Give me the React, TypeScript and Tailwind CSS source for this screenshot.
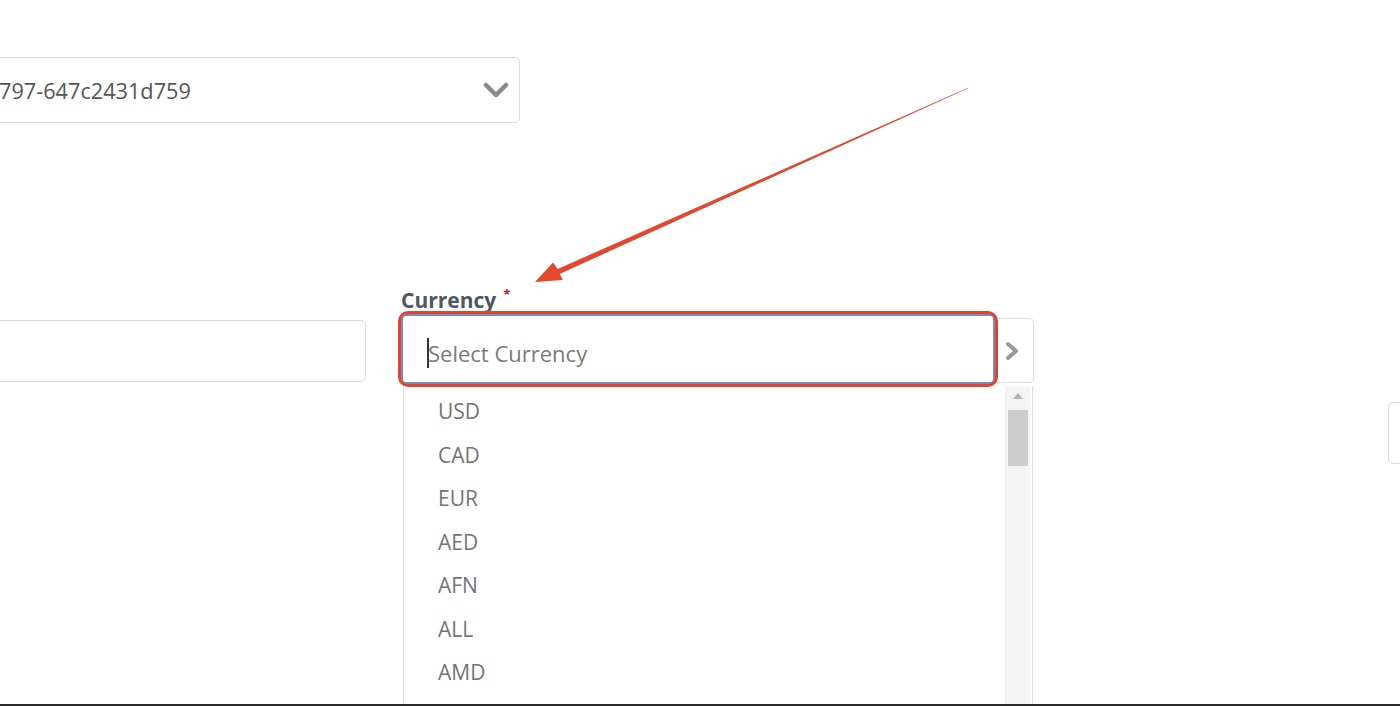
import React from "react";

const items = ["USD", "CAD", "EUR", "AED", "AFN", "ALL", "AMD", ""];

export default function App() {
  return (
    <div
      className="relative w-[1400px] h-[706px] overflow-hidden bg-white flex flex-col"
      style={{ fontFamily: '"Open Sans", "Noto Sans", sans-serif' }}
    >
      <div className="flex-1 overflow-hidden pt-[57px]">
        {/* top select */}
        <div className="ml-[-20px] w-[540px] h-[66px] border border-[#d9d9d9] rounded-[5px] flex items-center justify-between pr-[10px]">
          <span className="ml-[18px] text-[21.7px] text-[#555] mt-[2px]">797-647c2431d759</span>
          <svg width="26" height="16" viewBox="0 0 26 16">
            <polyline points="3,3 13,13 23,3" fill="none" stroke="#8a8a8a" strokeWidth="4.5" strokeLinecap="round" strokeLinejoin="round" />
          </svg>
        </div>

        {/* second row */}
        <div className="flex items-start mt-[166px]">
          <div className="ml-[-20px] w-[386px] h-[62px] mt-[31px] border border-[#d9d9d9] rounded-[5px] shrink-0" />

          <div className="ml-[35px] w-[633px] shrink-0 flex flex-col">
            <div className="h-[25px] flex items-start">
              <span className="text-[21px] font-bold text-[#4d5863] leading-[25px] mt-[-1px]">Currency</span>
              <span className="text-[13px] font-bold text-[#b0202a] ml-[7px] leading-none mt-[-1px]">*</span>
            </div>
            <div className="flex items-start h-[73px]">
              <div className="relative w-[594px] h-[70px] border-2 border-[#6f8fc4] rounded-[5px] flex items-center pl-[24px] shrink-0">
                <span className="w-[2px] h-[30px] bg-[#333] mt-[8px]" />
                <span className="text-[22px] text-[#7a7a7a] ml-[-1px] mt-[8px]">Select Currency</span>
                <div className="absolute inset-[-5px] border-[3px] border-[#e2432f] rounded-[10px] pointer-events-none" />
              </div>
              <div className="w-[39px] h-[65px] mt-[4px] border border-[#dcdcdc] border-l-0 rounded-r-[5px] flex items-center justify-center pr-[4px] shrink-0">
                <svg width="14" height="20" viewBox="0 0 14 20">
                  <polyline points="3,3 11,10 3,17" fill="none" stroke="#999" strokeWidth="4" strokeLinecap="round" strokeLinejoin="round" />
                </svg>
              </div>
            </div>
            <div className="ml-[2px] w-[630px] h-[330px] border-l border-r border-[#dedede] flex shadow-[2px_0_6px_rgba(0,0,0,0.04)]">
              <div className="flex-1 pt-[3px]">
                {items.map((c, i) => (
                  <div key={i} className="h-[43.5px] flex items-center pl-[34px] text-[21px] text-[#747474]">
                    {c}
                  </div>
                ))}
              </div>
              <div className="w-[25px] mr-[2px] bg-[#f3f3f3] flex flex-col items-center pt-[6px]">
                <svg width="10" height="6" viewBox="0 0 10 6">
                  <polygon points="5,0 10,6 0,6" fill="#b5b5b5" />
                </svg>
                <div className="w-[20px] h-[56px] bg-[#cdcdcd] mt-[11px]" />
              </div>
            </div>
          </div>

          <div className="ml-[354px] mt-[113px] w-[40px] h-[62px] border border-[#d9d9d9] rounded-[5px] shrink-0" />
        </div>
      </div>
      <div className="h-[2px] bg-[#2b2b2b] shrink-0" />

      {/* annotation arrow */}
      <svg className="absolute left-0 top-0 pointer-events-none" width="1400" height="706" viewBox="0 0 1400 706">
        <polygon
          points="968,87.8 968.2,88.2 559.7,273.9 563,280 535,282 553,262.5 557.7,268.9"
          fill="#e0492f"
        />
      </svg>
    </div>
  );
}
